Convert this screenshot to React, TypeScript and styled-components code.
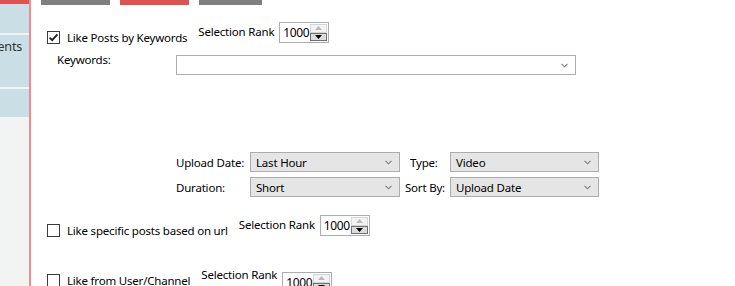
import React from "react";
import styled, { createGlobalStyle } from "styled-components";

const Global = createGlobalStyle`
  html, body { margin: 0; padding: 0; background: #fff; }
  body {
    font-family: "Segoe UI", "Noto Sans", "Open Sans", sans-serif;
    font-size: 11.5px;
    letter-spacing: -0.2px;
    color: #000;
  }
  #root { width: 735px; height: 286px; overflow: hidden; }
`;

const Frame = styled.div`
  display: flex;
  width: 735px;
  height: 286px;
  overflow: hidden;
`;

const Sidebar = styled.aside`
  flex: none;
  width: 29px;
  background: #f2f3f3;
  border-right: 2px solid #ef8a90;
  display: flex;
  flex-direction: column;
  overflow: hidden;
`;

const SideTop = styled.div`
  height: 4px;
  background: #e05252;
`;

const SideItem = styled.div<{ $h: number; $sep?: boolean }>`
  height: ${(p) => p.$h}px;
  flex: none;
  background: #c9dfe5;
  border-bottom: ${(p) => (p.$sep ? "2px solid #eef5f7" : "none")};
  display: flex;
  justify-content: flex-end;
  align-items: flex-start;
  overflow: hidden;
  white-space: nowrap;
  padding-right: 7px;
  box-sizing: content-box;
`;

const SideText = styled.span`
  font-size: 12.5px;
  letter-spacing: -0.2px;
  color: #333;
  margin-top: 3px;
  line-height: 18px;
`;

const Main = styled.main`
  flex: 1;
  display: flex;
  flex-direction: column;
  padding-left: 10px;
  background: #fff;
`;

const TabStrip = styled.div`
  display: flex;
  gap: 10px;
  height: 5px;
`;

const TabBar = styled.div<{ $w: number; $active?: boolean }>`
  width: ${(p) => p.$w}px;
  height: 5px;
  background: ${(p) => (p.$active ? "#e05252" : "#808080")};
`;

const Section = styled.div`
  display: flex;
  flex-direction: column;
  padding-left: 6px;
`;

const CheckRow = styled.div<{ $mt: number }>`
  display: flex;
  align-items: flex-start;
  margin-top: ${(p) => p.$mt}px;
`;

const CheckLabel = styled.label<{ $top: number }>`
  display: flex;
  align-items: center;
  gap: 7px;
  margin-top: ${(p) => p.$top}px;
  height: 13px;
  line-height: 13px;
  white-space: nowrap;
`;

const Box = styled.span`
  width: 11px;
  height: 11px;
  border: 1px solid #3c3c3c;
  background: #fff;
  display: flex;
  align-items: center;
  justify-content: center;
`;

const RankText = styled.span<{ $top: number }>`
  margin-left: 11px;
  margin-top: ${(p) => p.$top}px;
  line-height: 14px;
  white-space: nowrap;
`;

const Spin = styled.div<{ $top: number }>`
  margin-left: 5px;
  margin-top: ${(p) => p.$top}px;
  width: 48px;
  height: 19px;
  border: 1px solid #abadb3;
  background: #fff;
  display: flex;
  align-items: stretch;
`;

const SpinValue = styled.span`
  flex: 1;
  padding-left: 3px;
  line-height: 19px;
  font-size: 12px;
  letter-spacing: -0.4px;
`;

const SpinButtons = styled.div`
  width: 17px;
  flex: none;
  display: flex;
  flex-direction: column;
  padding: 1px 1px 1px 0;
`;

const SpinBtn = styled.div<{ $on?: boolean }>`
  flex: 1;
  box-sizing: border-box;
  border: 1px solid ${(p) => (p.$on ? "#707070" : "#d5d5d5")};
  background: ${(p) => (p.$on ? "#dcdcdc" : "#f3f3f3")};
  display: flex;
  align-items: center;
  justify-content: center;
`;

const FieldRow = styled.div`
  display: flex;
  align-items: flex-start;
  margin-top: 11px;
  padding-left: 10px;
`;

const FieldLabel = styled.span`
  width: 119px;
  flex: none;
  line-height: 14px;
  margin-top: -2px;
`;

const TextCombo = styled.div`
  width: 391px;
  height: 18px;
  border: 1px solid #abadb3;
  background: #fff;
  display: flex;
  align-items: center;
  justify-content: flex-end;
  padding-right: 7px;
  box-sizing: content-box;
`;

const FilterGrid = styled.div`
  display: grid;
  grid-template-columns: 74px 150px 50px 149px;
  grid-auto-rows: 20px;
  row-gap: 5px;
  margin-top: 77px;
  margin-left: 129px;
`;

const GridLabel = styled.span<{ $pad?: number }>`
  display: flex;
  align-items: center;
  padding-left: ${(p) => p.$pad ?? 0}px;
  white-space: nowrap;
`;

const Select = styled.div`
  box-sizing: border-box;
  height: 20px;
  border: 1px solid #acacac;
  background: #e5e5e5;
  display: flex;
  align-items: center;
  justify-content: space-between;
  padding: 0 7px 0 5px;
`;

const Chevron = () => (
  <svg width="7" height="5" viewBox="0 0 7 5">
    <polyline points="0.5,0.8 3.5,3.8 6.5,0.8" fill="none" stroke="#7a7a7a" strokeWidth="1.1" />
  </svg>
);

const Tick = () => (
  <svg width="11" height="11" viewBox="0 0 11 11">
    <polyline points="1.6,5.6 4.2,8.2 9.4,2.4" fill="none" stroke="#1e1e1e" strokeWidth="1.8" />
  </svg>
);

const Arrow = ({ up, color }: { up?: boolean; color: string }) => (
  <svg width="7" height="4" viewBox="0 0 7 4">
    {up ? <polygon points="0,4 7,4 3.5,0" fill={color} /> : <polygon points="0,0 7,0 3.5,4" fill={color} />}
  </svg>
);

const Check = ({ checked, label, top }: { checked?: boolean; label: string; top: number }) => (
  <CheckLabel $top={top}>
    <Box>{checked && <Tick />}</Box>
    <span>{label}</span>
  </CheckLabel>
);

const SpinBox = ({ top }: { top: number }) => (
  <Spin $top={top}>
    <SpinValue>1000</SpinValue>
    <SpinButtons>
      <SpinBtn>
        <Arrow up color="#b9b9b9" />
      </SpinBtn>
      <SpinBtn $on>
        <Arrow color="#000" />
      </SpinBtn>
    </SpinButtons>
  </Spin>
);

const Dropdown = ({ value }: { value: string }) => (
  <Select>
    <span>{value}</span>
    <Chevron />
  </Select>
);

export default function App() {
  return (
    <Frame>
      <Global />
      <Sidebar>
        <SideTop />
        <SideItem $h={29} $sep />
        <SideItem $h={52} $sep>
          <SideText>Comments</SideText>
        </SideItem>
        <SideItem $h={28} />
      </Sidebar>
      <Main>
        <TabStrip>
          <TabBar $w={69} />
          <TabBar $w={69} $active />
          <TabBar $w={63} />
        </TabStrip>
        <Section>
          <CheckRow $mt={17}>
            <Check checked label="Like Posts by Keywords" top={9} />
            <RankText $top={3}>Selection Rank</RankText>
            <SpinBox top={0} />
          </CheckRow>
          <FieldRow>
            <FieldLabel>Keywords:</FieldLabel>
            <TextCombo>
              <Chevron />
            </TextCombo>
          </FieldRow>
          <FilterGrid>
            <GridLabel>Upload Date:</GridLabel>
            <Dropdown value="Last Hour" />
            <GridLabel $pad={10}>Type:</GridLabel>
            <Dropdown value="Video" />
            <GridLabel>Duration:</GridLabel>
            <Dropdown value="Short" />
            <GridLabel $pad={5}>Sort By:</GridLabel>
            <Dropdown value="Upload Date" />
          </FilterGrid>
          <CheckRow $mt={18}>
            <Check label="Like specific posts based on url" top={9} />
            <RankText $top={3}>Selection Rank</RankText>
            <SpinBox top={0} />
          </CheckRow>
          <CheckRow $mt={31}>
            <Check label="Like from User/Channel" top={6} />
            <RankText $top={0}>Selection Rank</RankText>
            <SpinBox top={4} />
          </CheckRow>
        </Section>
      </Main>
    </Frame>
  );
}
